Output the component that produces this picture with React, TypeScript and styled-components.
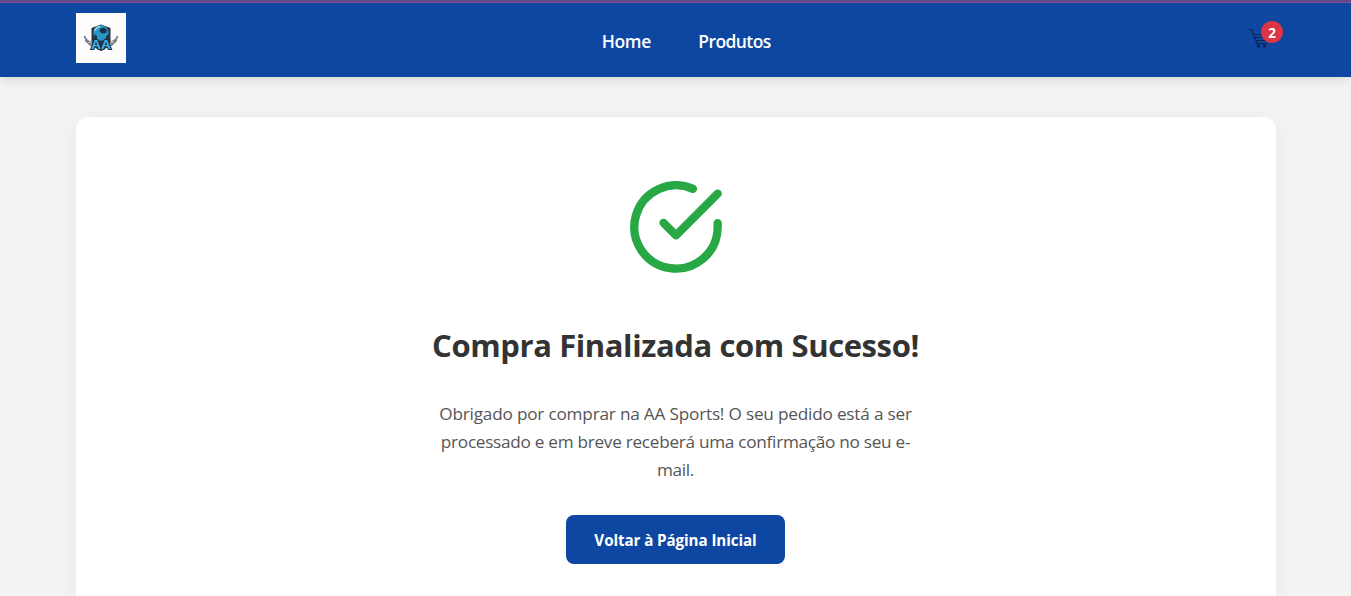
import React from "react";
import styled, { createGlobalStyle } from "styled-components";

const GlobalStyle = createGlobalStyle`
  * { box-sizing: border-box; margin: 0; padding: 0; }
  html, body { height: 100%; overflow: hidden; }
  body {
    background: #f3f3f3;
    color: #333;
    font-family: "Segoe UI", "Open Sans", "Noto Sans", sans-serif;
  }
`;

const Header = styled.header`
  position: relative;
  height: 77px;
  border-top: 2px solid #5f4a8b;
  background: #0d47a1;
  box-shadow: 0 2px 10px rgba(0, 0, 0, 0.13);
`;

const HeaderLine = styled.div`
  height: 1px;
  background: #85508f;
`;

const HeaderInner = styled.div`
  width: 1199px;
  height: 70px;
  margin: 0 auto;
  display: grid;
  grid-template-columns: 1fr auto 1fr;
  align-items: center;
`;

const LogoBox = styled.a`
  display: block;
  width: 50px;
  height: 50px;
  background: #fdfdfd;
`;

const LogoText = styled.text`
  font-family: "Liberation Sans", sans-serif;
  font-size: 12px;
  font-weight: 700;
  fill: #43b4e2;
  stroke: #1b3147;
  stroke-width: 2px;
  paint-order: stroke;
`;

const Nav = styled.nav`
  display: flex;
  gap: 47.5px;
  padding: 6px 0 0 21.5px;
`;

const NavLink = styled.a<{ $spacing: string }>`
  color: #fff;
  font-size: 17.5px;
  line-height: 24px;
  font-weight: 600;
  letter-spacing: ${(p) => p.$spacing};
`;

const Cart = styled.a`
  position: relative;
  justify-self: end;
  display: block;
  width: 26px;
  height: 24px;
  margin-top: 4px;
`;

const Badge = styled.span`
  position: absolute;
  top: -7px;
  right: -8px;
  width: 22px;
  height: 22px;
  border-radius: 50%;
  background: #dc3545;
  color: #fff;
  font-size: 13.5px;
  font-weight: 700;
  line-height: 24px;
  text-align: center;
`;

const Card = styled.main`
  width: 1200px;
  height: 479px;
  margin: 40px auto 0;
  padding: 60px 20px 0;
  display: flex;
  flex-direction: column;
  align-items: center;
  background: #fff;
  border-radius: 12px 12px 0 0;
  box-shadow: 0 4px 20px rgba(0, 0, 0, 0.05);
  text-align: center;
`;

const Title = styled.h1`
  margin-top: 46px;
  margin-bottom: 1px;
  font-size: 31px;
  line-height: 44px;
  font-weight: 700;
  color: #333;
  letter-spacing: -0.4px;
  white-space: nowrap;
`;

const Message = styled.p`
  width: 500px;
  margin-top: 32px;
  color: #555;
  font-size: 17.2px;
  line-height: 28px;
`;

const Line = styled.span<{ $spacing: string }>`
  display: block;
  white-space: nowrap;
  letter-spacing: ${(p) => p.$spacing};
`;

const Button = styled.a`
  width: 219px;
  height: 49px;
  margin-top: 31px;
  border-radius: 8px;
  background: #0d47a1;
  color: #fff;
  font-size: 15.2px;
  font-weight: 700;
  line-height: 51px;
  letter-spacing: -0.1px;
  white-space: nowrap;
`;

const Logo = () => (
  <svg width="50" height="50" viewBox="0 0 50 50" aria-label="AA Sports">
    <path d="M25 11.5 34.5 15v14c0 4-5 7-9.5 9C20.5 36 15.5 33 15.5 29V15Z" fill="#2b323c" />
    <circle cx="25" cy="20" r="7.7" fill="#2b97c9" />
    <path d="m24 15.500 4-1 3 2.500-1 3-4 .5-2.500-2ZM18 21l3 2v3h-2ZM31 22l2-1-2 5-2 1Z" fill="#16334d" />
    <path d="M18.500 18q1.500-4 6-4.500" fill="none" stroke="#8cdcf5" strokeWidth="1.5" />
    <path d="M8.500 23q1 5 7 6M9.500 27q2 4 6 4M12.500 31l4 2M41.500 23q-1 5-7 6M40.500 27q-2 4-6 4M37.500 31l-4 2" fill="none" stroke="#737a84" strokeWidth="1.6" />
    <path d="M10 24.500q2 3 5 4.500M40 24.500q-2 3-5 4.500" fill="none" stroke="#c4c9ce" strokeWidth=".9" />
    <LogoText x="25" y="35.5" textAnchor="middle" textLength="20" lengthAdjust="spacingAndGlyphs">AA</LogoText>
  </svg>
);

const CartIcon = () => (
  <svg width="20" height="21" viewBox="0 0 20 21" fill="none" stroke="#0a2554" strokeWidth="1.1">
    <path d="M0 1.500h2.500L8 15.500h10M4.500 6.500h14l-2 6H6.700M5.500 9.500H18" />
    <circle cx="9.500" cy="18" r="1.2" fill="#0a2554" />
    <circle cx="15.500" cy="18" r="1.2" fill="#0a2554" />
  </svg>
);

const SuccessIcon = () => (
  <svg width="100" height="100" viewBox="0 0 24 24" fill="none" stroke="#28a745" strokeWidth="2" strokeLinecap="round" strokeLinejoin="round">
    <path d="M22 11.08V12a10 10 0 1 1-5.93-9.14" />
    <polyline points="22 4 12 14.01 9 11.01" />
  </svg>
);

export default function App() {
  return (
    <>
      <GlobalStyle />
      <Header>
        <HeaderLine />
        <HeaderInner>
          <LogoBox><Logo /></LogoBox>
          <Nav>
            <NavLink $spacing="-0.4px">Home</NavLink>
            <NavLink $spacing="-0.6px">Produtos</NavLink>
          </Nav>
          <Cart>
            <CartIcon />
            <Badge>2</Badge>
          </Cart>
        </HeaderInner>
      </Header>
      <Card>
        <SuccessIcon />
        <Title>Compra Finalizada com Sucesso!</Title>
        <Message>
          <Line $spacing="-0.2px">Obrigado por comprar na AA Sports! O seu pedido está a ser</Line>
          <Line $spacing="-0.28px">processado e em breve receberá uma confirmação no seu e-</Line>
          <Line $spacing="-0.3px">mail.</Line>
        </Message>
        <Button>Voltar à Página Inicial</Button>
      </Card>
    </>
  );
}
